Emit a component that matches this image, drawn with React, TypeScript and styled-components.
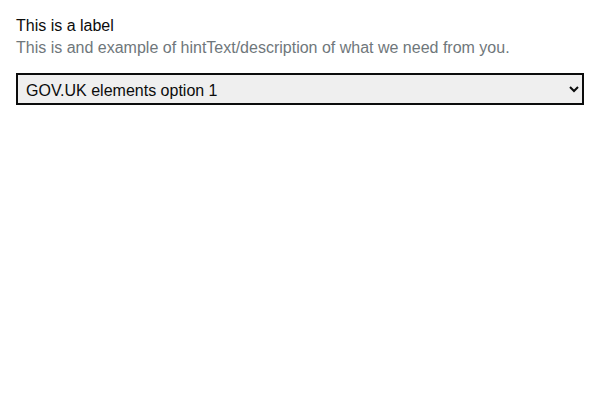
import React from "react";
import styled, { createGlobalStyle } from "styled-components";

const GlobalStyle = createGlobalStyle`
  body {
    margin: 0;
    background: #ffffff;
    font-family: "Liberation Sans", Arial, sans-serif;
  }
`;

const FormGroup = styled.div`
  padding: 17px 16px 16px;
  display: flex;
  flex-direction: column;
`;

const Label = styled.label`
  font-size: 16px;
  line-height: 18px;
  color: #0b0c0c;
`;

const Hint = styled.span`
  font-size: 16px;
  line-height: 18px;
  margin-top: 4px;
  color: #6f777b;
`;

const Select = styled.select`
  margin-top: 16px;
  width: 100%;
  height: 32px;
  box-sizing: border-box;
  border: 2px solid #0b0c0c;
  border-radius: 0;
  background: #efefef;
  font-family: "Liberation Sans", Arial, sans-serif;
  font-size: 16px;
  color: #0b0c0c;
  padding: 2px 4px 0;
`;

export default function App() {
  return (
    <>
      <GlobalStyle />
      <FormGroup>
        <Label htmlFor="select-box">This is a label</Label>
        <Hint>This is and example of hintText/description of what we need from you.</Hint>
        <Select id="select-box" defaultValue="1">
          <option value="1">GOV.UK elements option 1</option>
          <option value="2">GOV.UK elements option 2</option>
          <option value="3">GOV.UK elements option 3</option>
        </Select>
      </FormGroup>
    </>
  );
}
